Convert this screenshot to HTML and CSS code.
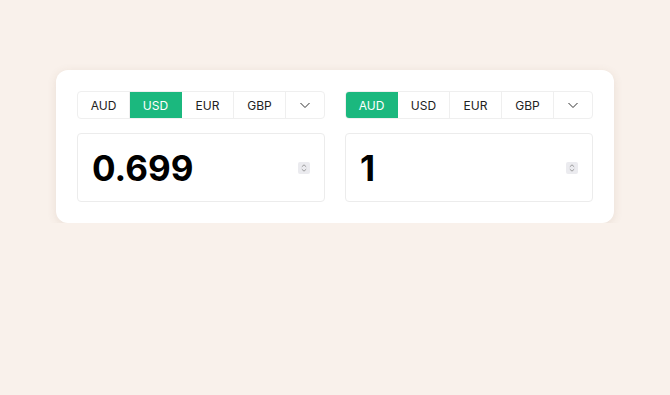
FILE: index.html
```html
<!DOCTYPE html>
<html>
<head>
<meta charset="utf-8" />
<title>Converter</title>
<link rel="stylesheet" href="styles.css">
</head>
<body>
	<div class="card">
		<div class="col">
			<div class="tabs">
				<span class="tab">AUD</span>
				<span class="tab on">USD</span>
				<span class="tab">EUR</span>
				<span class="tab">GBP</span>
				<span class="tab more"><svg width="12" height="8" viewBox="0 0 12 8"><path d="M1.5 2l4.5 4.5 4.5-4.5" fill="none" stroke="#333" stroke-width="1"/></svg></span>
			</div>
			<div class="field">
				<span class="num">0.699</span>
				<span class="spin"><svg width="12" height="12" viewBox="0 0 12 12"><path d="M3.8 4.8L6 2.8l2.2 2M3.8 7.2L6 9.2l2.2-2" fill="none" stroke="#888" stroke-width="0.8"/></svg></span>
			</div>
		</div>
		<div class="col">
			<div class="tabs">
				<span class="tab on">AUD</span>
				<span class="tab">USD</span>
				<span class="tab">EUR</span>
				<span class="tab">GBP</span>
				<span class="tab more"><svg width="12" height="8" viewBox="0 0 12 8"><path d="M1.5 2l4.5 4.5 4.5-4.5" fill="none" stroke="#333" stroke-width="1"/></svg></span>
			</div>
			<div class="field">
				<span class="num">1</span>
				<span class="spin"><svg width="12" height="12" viewBox="0 0 12 12"><path d="M3.8 4.8L6 2.8l2.2 2M3.8 7.2L6 9.2l2.2-2" fill="none" stroke="#888" stroke-width="0.8"/></svg></span>
			</div>
		</div>
	</div>
</body>
</html>
```

FILE: styles.css
```css
*{margin:0; padding:0; box-sizing:border-box;}
body{background:#f9f1eb; font-family:Inter, "Liberation Sans", sans-serif; color:#111;}
.card{display:flex; gap:20px; width:558px; margin:70px 0 0 56px; padding:21px; background:#fff; border-radius:12px; box-shadow:0 2px 10px rgba(120,90,60,0.12);}
.col{flex:1; display:flex; flex-direction:column; gap:14px;}
.tabs{display:flex; height:28px; border:1px solid #efefef; border-radius:4px; overflow:hidden;}
.tab{flex:0 0 52px; display:flex; align-items:center; justify-content:center; font-size:12px; color:#222; border-right:1px solid #efefef;}
.tab.on{background:#1bb87e; color:#fff; border-right-color:#1bb87e;}
.tab.more{flex:1; border-right:0;}
.field{height:69px; display:flex; align-items:center; justify-content:space-between; padding:0 14px 0 14px; border:1px solid #ececec; border-radius:4px;}
.num{font-size:35px; font-weight:700; color:#000;}
.spin{width:12px; height:12px; background:#ebebef; border-radius:2px; display:flex;}
```
